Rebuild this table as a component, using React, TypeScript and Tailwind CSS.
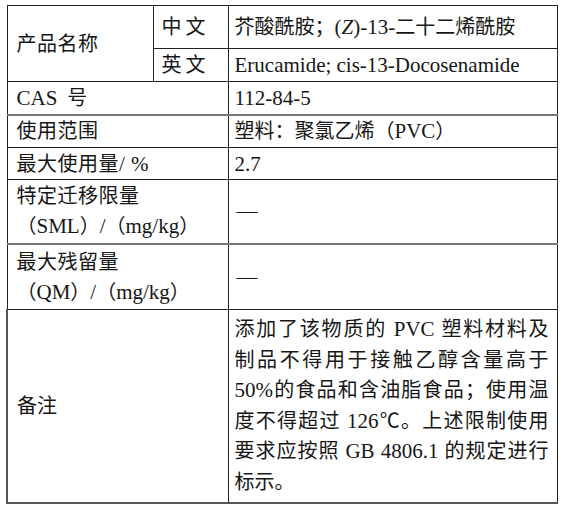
import React from "react";

const font = { fontFamily: '"Liberation Serif", "Noto Sans CJK SC", serif' };

function L({ children }: { children: React.ReactNode }) {
  return <span className="font-['Liberation_Serif',serif] text-[21px]">{children}</span>;
}

export default function App() {
  const td = "border border-[#222] align-middle p-0";
  const noteLines: React.ReactNode[] = [
    <>添加了该物质的 <L>PVC</L> 塑料材料及</>,
    <>制品不得用于接触乙醇含量高于</>,
    <><L>50%</L>的食品和含油脂食品；使用温</>,
    <>度不得超过 <L>126</L>℃。上述限制使用</>,
    <>要求应按照 <L>GB 4806.1</L> 的规定进行</>,
  ];
  return (
    <div className="w-[562px] h-[511px] bg-white pl-[6px] pt-[5px] text-[#161616]" style={font}>
      <table className="table-fixed border-collapse w-[550px] text-[20px] leading-[30px]">
        <colgroup>
          <col className="w-[146px]" />
          <col className="w-[75px]" />
          <col className="w-[329px]" />
        </colgroup>
        <tbody>
          <tr className="h-[43px]">
            <td rowSpan={2} className={`${td} pl-[9px] tracking-[0.5px]`}>产品名称</td>
            <td className={`${td} pl-[8px] tracking-[4px]`}>中文</td>
            <td className={`${td} pl-[6px]`}>
              芥酸酰胺；<L>(<i>Z</i>)-13-</L>二十二烯酰胺
            </td>
          </tr>
          <tr className="h-[33px]">
            <td className={`${td} pl-[8px] tracking-[4px]`}>英文</td>
            <td className={`${td} pl-[6px]`}><L>Erucamide; cis-13-Docosenamide</L></td>
          </tr>
          <tr className="h-[33px]">
            <td colSpan={2} className={`${td} pl-[9px] border-b-2 border-b-[#777]`}>
              <L>CAS</L>&nbsp;&nbsp;号
            </td>
            <td className={`${td} pl-[6px] border-b-2 border-b-[#777]`}><L>112-84-5</L></td>
          </tr>
          <tr className="h-[33px]">
            <td colSpan={2} className={`${td} pl-[9px] tracking-[0.5px]`}>使用范围</td>
            <td className={`${td} pl-[6px]`}>塑料：聚氯乙烯（<L>PVC</L>）</td>
          </tr>
          <tr className="h-[32px]">
            <td colSpan={2} className={`${td} pl-[9px] tracking-[0.5px]`}>最大使用量<L>/ %</L></td>
            <td className={`${td} pl-[6px]`}><L>2.7</L></td>
          </tr>
          <tr className="h-[64px]">
            <td colSpan={2} className={`${td} pl-[9px] border-b-2 border-b-[#777]`}>
              <div className="tracking-[0.5px]">特定迁移限量</div>
              <div>（<L>SML</L>）<L>/</L>（<L>mg/kg</L>）</div>
            </td>
            <td className={`${td} pl-[8px] border-b-2 border-b-[#777]`}><L>—</L></td>
          </tr>
          <tr className="h-[66px]">
            <td colSpan={2} className={`${td} pl-[9px]`}>
              <div className="tracking-[0.5px]">最大残留量</div>
              <div>（<L>QM</L>）<L>/</L>（<L>mg/kg</L>）</div>
            </td>
            <td className={`${td} pl-[8px]`}><L>—</L></td>
          </tr>
          <tr className="h-[193px]">
            <td colSpan={2} className={`${td} pl-[9px] border-l-2 border-b-2 border-l-[#555] border-b-[#555]`}>
              备注
            </td>
            <td className={`${td} pl-[6px] pr-[8px] border-b-2 border-b-[#555]`}>
              <div className="leading-[30.6px]">
                {noteLines.map((l, i) => (
                  <div key={i} className="text-justify [text-align-last:justify] whitespace-nowrap">
                    {l}
                  </div>
                ))}
                <div>标示。</div>
              </div>
            </td>
          </tr>
        </tbody>
      </table>
    </div>
  );
}
